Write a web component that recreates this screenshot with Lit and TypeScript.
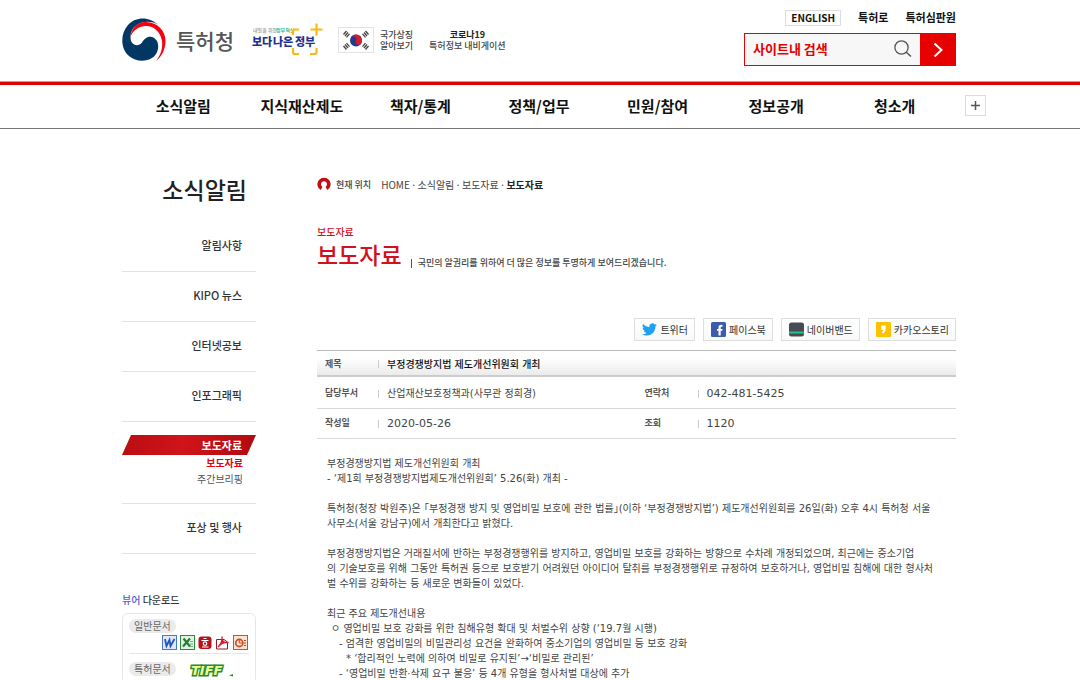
import { LitElement, html, css, svg } from "lit";
import { customElement } from "lit/decorators.js";

const NAV = ["소식알림", "지식재산제도", "책자/통계", "정책/업무", "민원/참여", "정보공개", "청소개"];

const ARTICLE: { text: string; level?: number }[] = [
  { text: "부정경쟁방지법 제도개선위원회 개최" },
  { text: "- ‘제1회 부정경쟁방지법제도개선위원회’ 5.26(화) 개최 -" },
  { text: "" },
  { text: "특허청(청장 박원주)은 「부정경쟁 방지 및 영업비밀 보호에 관한 법률」(이하 ‘부정경쟁방지법’) 제도개선위원회를 26일(화) 오후 4시 특허청 서울" },
  { text: "사무소(서울 강남구)에서 개최한다고 밝혔다." },
  { text: "" },
  { text: "부정경쟁방지법은 거래질서에 반하는 부정경쟁행위를 방지하고, 영업비밀 보호를 강화하는 방향으로 수차례 개정되었으며, 최근에는 중소기업" },
  { text: "의 기술보호를 위해 그동안 특허권 등으로 보호받기 어려웠던 아이디어 탈취를 부정경쟁행위로 규정하여 보호하거나, 영업비밀 침해에 대한 형사처" },
  { text: "벌 수위를 강화하는 등 새로운 변화들이 있었다." },
  { text: "" },
  { text: "최근 주요 제도개선내용" },
  { text: "ㅇ 영업비밀 보호 강화를 위한 침해유형 확대 및 처벌수위 상향 (‘19.7월 시행)", level: 1 },
  { text: "- 엄격한 영업비밀의 비밀관리성 요건을 완화하여 중소기업의 영업비밀 등 보호 강화", level: 2 },
  { text: "* ‘합리적인 노력에 의하여 비밀로 유지된’→‘비밀로 관리된’", level: 3 },
  { text: "- ‘영업비밀 반환·삭제 요구 불응’ 등 4개 유형을 형사처벌 대상에 추가", level: 2 },
];

const emblem = svg`<svg width="44" height="44" viewBox="0 0 44 44" aria-hidden="true">
  <path d="M36 7C28 -1.500 14 -2 6 7C-2 16 -1.500 31 7 38C15 45 29 44 34 36C38 29.500 36.500 21 30 19C25 18 22.500 21 20 24.500C17 28.500 11 28 9 23C7 15 11 7 20 4.500C26 3 32 4 36 7Z" fill="#003764"/>
  <path d="M8.500 19C9 10 16 3.500 24 4C36 4.500 43.500 13 43.500 23C43.500 32 39 39 34 43C38.500 37 41 31 40 23C38.500 14 32 8 24 8C17 8 11 12 8.500 19Z" fill="#f5000f"/>
</svg>`;

const slogan = svg`<svg width="72" height="34" viewBox="0 0 72 34" role="img" aria-label="보다 나은 정부">
  <text class="tiny" x="1" y="9" fill="#999">내일을 위한</text>
  <text class="tiny" x="24" y="9" fill="#19b184">정부혁신</text>
  <text class="slogan" x="0" y="23" fill="#23318c">보다</text>
  <text class="slogan" x="21" y="23" fill="#23318c">나은</text>
  <text class="slogan" x="43" y="23" fill="#23318c">정부</text>
  <path d="M41 12V8.500Q41 6.500 43 6.500H47M41 25V29Q41 31 43 31H47M58 31H62.500Q64.500 31 64.500 29V25M64.500 0.500V12.500M58.500 6.500H70.500" fill="none" stroke="#fdb913" stroke-width="2.200"/>
</svg>`;

const flag = svg`<svg width="36" height="26" viewBox="0 0 36 26" aria-hidden="true">
  <rect x=".5" y=".5" width="35" height="25" fill="#fff" stroke="#e3e3e3"/>
  <circle cx="18" cy="13.500" r="6" fill="#253a8e"/>
  <path transform="rotate(25 18 13.500)" d="M12 13.500A6 6 0 0 1 24 13.500A3 3 0 0 1 18 13.500A3 3 0 0 0 12 13.500Z" fill="#d91c2c"/>
  <g stroke="#444" stroke-width="1.300" fill="none">
    <path d="M5.500 7.500L8.500 4M7 9L10 5.500M8.500 10.300L11.500 6.800"/>
    <path d="M30.500 7.500L27.500 4M29 9L26 5.500M27.500 10.300L24.500 6.800"/>
    <path d="M5.500 19L8.500 22.500M7 17.500L10 21M8.500 16.200L11.500 19.700"/>
    <path d="M30.500 19L27.500 22.500M29 17.500L26 21M27.500 16.200L24.500 19.700"/>
  </g>
</svg>`;

const magnifier = svg`<svg width="18" height="18" viewBox="0 0 18 18" aria-hidden="true"><circle cx="7.500" cy="7.500" r="6.600" fill="none" stroke="#555" stroke-width="1.300"/><path d="M12 12L17 16.500" stroke="#555" stroke-width="1.500"/></svg>`;
const chevron = svg`<svg width="10" height="16" viewBox="0 0 10 16" aria-hidden="true"><path d="M1.500 1.500L8.500 8L1.500 14.500" fill="none" stroke="#fff" stroke-width="2"/></svg>`;
const plus = svg`<svg width="9" height="9" viewBox="0 0 9 9" aria-hidden="true"><path d="M4.500 0V9M0 4.500H9" stroke="#555" stroke-width="1.500"/></svg>`;
const ring = svg`<svg width="14" height="14" viewBox="0 0 14 14" aria-hidden="true"><path d="M4.600 11.400A4.800 4.800 0 1 1 9.400 11.400" fill="none" stroke="#c40d14" stroke-width="3.600"/></svg>`;

const twitter = svg`<svg width="15" height="15" viewBox="0 0 24 24" aria-hidden="true"><path fill="#1da1f2" d="M24 4.600a10 10 0 0 1-2.800.8 5 5 0 0 0 2.200-2.700c-1 .6-2 1-3.100 1.200a4.900 4.900 0 0 0-8.400 4.500A14 14 0 0 1 1.700 3.100a4.900 4.900 0 0 0 1.500 6.600c-.8 0-1.600-.3-2.200-.6v.1a4.900 4.900 0 0 0 3.900 4.800 5 5 0 0 1-2.200.1 4.900 4.900 0 0 0 4.600 3.400A9.900 9.900 0 0 1 0 19.500 14 14 0 0 0 7.500 21.700c9.100 0 14-7.500 14-14v-.6A10 10 0 0 0 24 4.600z"/></svg>`;
const facebook = svg`<svg width="15" height="15" viewBox="0 0 15 15" aria-hidden="true"><rect width="15" height="15" rx="1.500" fill="#3b5cad"/><path d="M7.500 13.500V8.800H6V6.900H7.500V5.500C7.500 3.300 8.700 2.600 11.500 2.900V4.800C10.200 4.700 9.700 4.900 9.700 5.800V6.900H11.500L11.200 8.800H9.700V13.500Z" fill="#fff"/></svg>`;
const band = svg`<svg width="15" height="15" viewBox="0 0 15 15" aria-hidden="true"><rect width="15" height="14" y=".5" rx="2.500" fill="#474b57"/><path d="M0 9.500H15V11.500H0Z" fill="#1fc77c"/></svg>`;
const kakao = svg`<svg width="15" height="15" viewBox="0 0 15 15" aria-hidden="true"><rect width="15" height="15" rx="1" fill="#fcc200"/><path d="M5.300 3.500H9.600V7C9.600 9.500 8.600 11 6.300 11.500L5.800 10C6.800 9.500 7.100 9 7.200 8H5.300Z" fill="#fff"/></svg>`;

const SHARES = [
  { icon: twitter, label: "트위터" },
  { icon: facebook, label: "페이스북" },
  { icon: band, label: "네이버밴드" },
  { icon: kakao, label: "카카오스토리" },
];

const word = svg`<svg width="15" height="15" viewBox="0 0 15 15"><rect x=".5" y=".5" width="14" height="14" fill="#dfe9fb" stroke="#4a78d0"/><path d="M3 4L4.500 11L7.500 5L8.500 11L12.500 4" fill="none" stroke="#2456b8" stroke-width="1.800"/></svg>`;
const excel = svg`<svg width="15" height="15" viewBox="0 0 15 15"><rect x=".5" y=".5" width="14" height="14" fill="#e2f3e2" stroke="#2a8a3c"/><path d="M3.500 3.500L10 11.500M10 3.500L3 11.500" stroke="#20803a" stroke-width="2.200"/><path d="M10 6.500H13M10 9H13M10 11.500H13" stroke="#6bb47a"/></svg>`;
const hangul = svg`<svg width="14" height="15" viewBox="0 0 14 15"><rect x=".5" y="1.500" width="13" height="12.500" rx="3" fill="#b5121b"/><path d="M5.500 3.500H8.500M3.500 5.500H10.500M4 12H10.500" stroke="#fff" stroke-width="1.200"/><circle cx="7" cy="8.600" r="1.800" fill="none" stroke="#fff" stroke-width="1.200"/></svg>`;
const pdf = svg`<svg width="15" height="15" viewBox="0 0 15 15"><path d="M1.500 4.500H9L12.500 7V14H1.500Z" fill="#fff" stroke="#8e1a2c"/><path d="M3 12C6 9 7.500 5 7 1.500C6.500 6 9 8 13.500 7.500C10 7 6 8.500 3 12Z" fill="#e1192c" stroke="#e1192c" stroke-width="1.300"/></svg>`;
const ppt = svg`<svg width="15" height="15" viewBox="0 0 15 15"><rect x=".5" y=".5" width="14" height="14" fill="#fbe3d3" stroke="#d1521e"/><circle cx="6.300" cy="8" r="3.600" fill="none" stroke="#cc4a17" stroke-width="1.600"/><path d="M6.300 8V4.500M6.300 8H9.500M11 5.500H13M11 8H13M11 10.500H13" stroke="#cc4a17"/></svg>`;
const tiff = svg`<svg width="46" height="18" viewBox="0 0 46 18" role="img" aria-label="TIFF"><text class="tiff" x="1" y="13">TIFF</text><path d="M39 13.500L43 12V14.500Z" fill="#2b8a2b"/></svg>`;

@customElement("app-root")
export class AppRoot extends LitElement {
  static styles = css`
    :host {
      display: block;
      background: #fff;
      color: #444;
      font: 10px/15px "Noto Sans CJK KR", sans-serif;
    }
    * { box-sizing: border-box; }
    a { color: inherit; text-decoration: none; }
    ul, h1, h2, p { margin: 0; padding: 0; list-style: none; }
    svg { display: block; flex: none; }
    button { font: inherit; cursor: pointer; }
    .wrap { max-width: 836px; margin: 0 auto; padding-right: 2px; }

    .header { border-bottom: 1px solid #f08a8a; }
    .header-in { display: flex; justify-content: space-between; height: 81px; }
    .brand { display: flex; align-items: center; font-weight: 500; line-height: 11px; font-size: 9px; padding-bottom: 2px; }
    .logo { display: flex; align-items: center; gap: 10px; font-size: 21px; line-height: 30px; color: #555; font-weight: 500; margin-right: 18px; }
    .slogan-link { margin-right: 14px; }
    .tiny { font-size: 5px; font-weight: 500; }
    .slogan { font-size: 11px; font-weight: 900; }
    .symbol { display: flex; align-items: center; gap: 6px; margin-right: 16px; }
    .covid { text-align: center; }
    .covid strong { display: block; color: #222; }
    .utility { width: 212px; padding-top: 9px; }
    .links { display: flex; align-items: center; justify-content: flex-end; gap: 17px; height: 17px; margin-bottom: 7px; font-size: 11px; font-weight: 700; color: #111; }
    .english { border: 1px solid #ddd; padding: 0 5px; line-height: 14px; font-size: 10px; }
    .search { display: flex; height: 33px; }
    .field { display: flex; flex: 1; align-items: center; min-width: 0; background: #f7f7f7; border: 1px solid #e60000; border-right: 0; padding: 0 8px 2px; }
    .field input { flex: 1; min-width: 0; width: 0; border: 0; padding: 0; background: none; outline: 0; font: 700 13px/20px "Noto Sans CJK KR", sans-serif; color: #e60000; }
    .field input::placeholder { color: #e60000; opacity: 1; }
    .go { display: flex; align-items: center; justify-content: center; width: 36px; border: 0; padding: 0; background: #e60000; }

    .nav { border-top: 3px solid #e10000; border-bottom: 1px solid #777; }
    .nav-in { display: flex; align-items: center; gap: 11px; max-width: 892px; height: 43px; margin: 0 auto; padding: 0 0 2px 30px; }
    .menu { flex: 1; display: grid; grid-template-columns: repeat(7, 1fr); text-align: center; font-size: 15px; line-height: 22px; font-weight: 700; color: #111; }
    .all { display: flex; align-items: center; justify-content: center; width: 21px; height: 21px; border: 1px solid #ddd; background: #fff; padding: 0; }

    .page { display: flex; gap: 61px; }
    .side { width: 134px; flex: none; padding-top: 43px; color: #333; }
    .side h2 { padding-right: 9px; text-align: right; font-size: 23px; line-height: 34px; font-weight: 500; color: #222; margin-bottom: 16px; }
    .item { border-bottom: 1px solid #e2e2e2; }
    .item > a { display: block; padding: 0 14px 3px 0; text-align: right; font-size: 11px; line-height: 46px; font-weight: 500; }
    .item.open { padding: 13px 0 16px; }
    .item.open > a { padding-bottom: 0; line-height: 20px; color: #fff; font-weight: 700; background: linear-gradient(100deg, #b80d12, #d0141a 45%, #b00a10); clip-path: polygon(9px 0, 100% 0, 125px 100%, 0 100%); }
    .sub { padding-right: 13px; text-align: right; line-height: 16px; color: #555; }
    .sub .on { color: #e00010; font-weight: 700; }
    .viewer { margin-top: 38px; font-size: 10px; line-height: 16px; font-weight: 500; }
    .viewer em { font-style: normal; color: #5560cc; }
    .box { margin-top: 5px; border: 1px solid #e6e6e6; border-radius: 6px; padding: 4px 6px; }
    .pill { display: inline-block; border-radius: 7px; background: #ebebeb; padding: 0 5px; line-height: 14px; color: #666; }
    .icons { display: flex; justify-content: flex-end; gap: 3px; padding: 2px 1px 3px; }
    .group + .group { border-top: 1px solid #e6e6e6; padding-top: 8px; }
    .viewers { display: flex; gap: 14px; align-items: flex-start; }
    .tiff { font: italic 700 13px/15px "DejaVu Sans", sans-serif; fill: #e9ff9c; stroke: #2b8a2b; stroke-width: 3px; paint-order: stroke; }

    .content { flex: 1; min-width: 0; padding-top: 47px; }
    .crumbs { display: flex; align-items: center; height: 16px; gap: 1px; }
    .here { font-size: 9px; font-weight: 500; margin: 0 9px 0 4px; }
    .crumbs b { color: #222; }
    .heading { margin-top: 33px; color: #d3101b; }
    .kicker { font-weight: 500; line-height: 14px; }
    .title { display: flex; align-items: flex-end; gap: 9px; }
    .title h1 { font-size: 23px; line-height: 30px; font-weight: 500; }
    .title p { font-size: 9px; line-height: 12px; font-weight: 500; color: #444; }
    .bar { display: inline-block; width: 1px; height: 9px; background: #555; margin-right: 6px; vertical-align: middle; }
    .shares { display: flex; justify-content: flex-end; gap: 8px; margin: 49px 0 9px; }
    .shares a { display: flex; align-items: center; gap: 3px; height: 23px; border: 1px solid #ddd; background: linear-gradient(#fff, #f7f9f9); padding: 0 6px 0 7px; color: #333; }

    .info { width: 100%; border-collapse: separate; border-spacing: 0; table-layout: fixed; border-top: 1px solid #bbb; font-family: "DejaVu Sans", "Noto Sans CJK KR", sans-serif; }
    .info th, .info td { padding: 0; text-align: left; height: 30px; line-height: 15px; border-bottom: 1px solid #d8d8d8; }
    .info .tall th, .info .tall td { height: 32px; padding-top: 2px; }
    .info .head th, .info .head td { height: 26px; padding-top: 2px; background: linear-gradient(#fff 30%, #ebebeb); border-bottom: 2px solid #ccc; }
    .info .head td { color: #111; font-weight: 500; }
    .info th { color: #555; font-size: 9px; }
    .info th span { display: flex; align-items: center; justify-content: space-between; padding: 0 8px; }
    .info th span::after { content: ""; width: 1px; height: 8px; background: #ccc; }
    .label { width: 70px; }
    .info .num { font-size: 11px; }

    .article { padding: 17px 10px 0; font-family: "DejaVu Sans", "Noto Sans CJK KR", sans-serif; font-feature-settings: "halt"; }
    .article p { min-height: 15px; white-space: nowrap; }
    .l1 { padding-left: 4px; }
    .l2 { padding-left: 12px; }
    .l3 { padding-left: 19px; }
  `;

  render() {
    return html`
      <header class="header">
        <div class="wrap header-in">
          <div class="brand">
            <a class="logo" href="#">${emblem}<span>특허청</span></a>
            <a class="slogan-link" href="#">${slogan}</a>
            <a class="symbol" href="#">${flag}<span>국가상징<br />알아보기</span></a>
            <a class="covid" href="#"><strong>코로나19</strong>특허정보 내비게이션</a>
          </div>
          <div class="utility">
            <div class="links">
              <a class="english" href="#">ENGLISH</a><a href="#">특허로</a><a href="#">특허심판원</a>
            </div>
            <form class="search">
              <label class="field"><input type="text" aria-label="사이트내 검색" placeholder="사이트내 검색" />${magnifier}</label>
              <button class="go" type="button" aria-label="검색">${chevron}</button>
            </form>
          </div>
        </div>
      </header>
      <nav class="nav">
        <div class="nav-in">
          <div class="menu">${NAV.map((n) => html`<a href="#">${n}</a>`)}</div>
          <button class="all" type="button" aria-label="전체메뉴">${plus}</button>
        </div>
      </nav>
      <div class="wrap page">
        <aside class="side">
          <h2>소식알림</h2>
          <ul>
            ${["알림사항", "KIPO 뉴스", "인터넷공보", "인포그래픽"].map((t) => html`<li class="item"><a href="#">${t}</a></li>`)}
            <li class="item open">
              <a href="#">보도자료</a>
              <ul class="sub">
                <li class="on"><a href="#">보도자료</a></li>
                <li><a href="#">주간브리핑</a></li>
              </ul>
            </li>
            <li class="item"><a href="#">포상 및 행사</a></li>
          </ul>
          <p class="viewer"><em>뷰어</em> 다운로드</p>
          <div class="box">
            <div class="group">
              <span class="pill">일반문서</span>
              <div class="icons">${word}${excel}${hangul}${pdf}${ppt}</div>
            </div>
            <div class="group viewers"><span class="pill">특허문서</span>${tiff}</div>
          </div>
        </aside>
        <main class="content">
          <div class="crumbs">
            ${ring}<span class="here">현재 위치</span><a href="#">HOME</a><span>·</span><a href="#">소식알림</a><span>·</span><a href="#">보도자료</a><span>·</span><b>보도자료</b>
          </div>
          <div class="heading">
            <p class="kicker">보도자료</p>
            <div class="title">
              <h1>보도자료</h1>
              <p><span class="bar"></span>국민의 알권리를 위하여 더 많은 정보를 투명하게 보여드리겠습니다.</p>
            </div>
          </div>
          <div class="shares">${SHARES.map((s) => html`<a href="#">${s.icon}<span>${s.label}</span></a>`)}</div>
          <table class="info">
            <colgroup><col class="label" /><col /><col class="label" /><col /></colgroup>
            <tbody>
              <tr class="head"><th scope="row"><span>제목</span></th><td colspan="3">부정경쟁방지법 제도개선위원회 개최</td></tr>
              <tr class="tall"><th scope="row"><span>담당부서</span></th><td>산업재산보호정책과(사무관 정희경)</td><th scope="row"><span>연락처</span></th><td class="num">042-481-5425</td></tr>
              <tr><th scope="row"><span>작성일</span></th><td class="num">2020-05-26</td><th scope="row"><span>조회</span></th><td class="num">1120</td></tr>
            </tbody>
          </table>
          <article class="article">${ARTICLE.map((l) => html`<p class="l${l.level ?? 0}">${l.text}</p>`)}</article>
        </main>
      </div>
    `;
  }
}
